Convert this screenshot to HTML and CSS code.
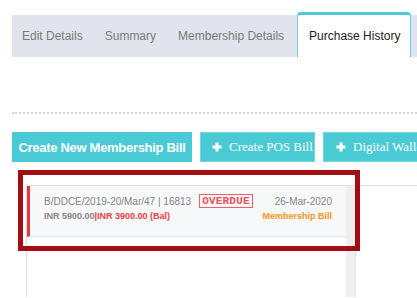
FILE: index.html
```html
<!DOCTYPE html>
<html>
<head>
<meta charset="utf-8">
<link rel="stylesheet" href="styles.css">
</head>
<body>
<div class="page">
  <div class="tabs">
    <div class="tab first">Edit Details</div>
    <div class="tab">Summary</div>
    <div class="tab">Membership Details</div>
    <div class="tab active">Purchase History</div>
  </div>
  <div class="divider"></div>
  <div class="actions">
    <div class="btn btn-main">Create New Membership Bill</div>
    <div class="btn btn-icon btn-pos">
      <svg class="plus" width="10" height="10" viewBox="0 0 10 10"><path d="M5 0.5V9.5M0.5 5H9.5" stroke="#fff" stroke-width="3"/></svg>
      <span>Create POS Bill</span>
    </div>
    <div class="btn btn-icon btn-wallet">
      <svg class="plus" width="10" height="10" viewBox="0 0 10 10"><path d="M5 0.5V9.5M0.5 5H9.5" stroke="#fff" stroke-width="3"/></svg>
      <span>Digital Wallet</span>
    </div>
  </div>
  <div class="panel">
    <div class="list">
      <div class="card">
        <div class="row">
          <div class="left">
            <span class="bill-no">B/DDCE/2019-20/Mar/47 | 16813</span>
            <span class="stamp">OVERDUE</span>
          </div>
          <span class="date">26-Mar-2020</span>
        </div>
        <div class="row">
          <div class="amounts"><span class="amt">INR 5900.00</span><span class="bal">|INR 3900.00 (Bal)</span></div>
          <span class="type">Membership Bill</span>
        </div>
      </div>
    </div>
    <div class="scroll"></div>
    <div class="rest"></div>
  </div>
  <div class="highlight"></div>
</div>
</body>
</html>
```
FILE: styles.css
```css
html, body {
  margin: 0;
  padding: 0;
  background: #fff;
  overflow: hidden;
  width: 417px;
  height: 298px;
}
.page {
  position: relative;
  font-family: "Liberation Sans", Arial, sans-serif;
  padding-left: 12px;
  height: 298px;
  box-sizing: border-box;
  overflow: hidden;
}
.tabs {
  margin-top: 15px;
  height: 42px;
  background: #e1e4ec;
  display: flex;
  align-items: flex-end;
}
.tab {
  height: 42px;
  line-height: 42px;
  padding: 0 11px;
  font-size: 12px;
  color: #7a7a7a;
  white-space: nowrap;
}
.tab.first {
  padding-left: 10px;
}
.tab.active {
  margin-left: 2px;
  height: 45px;
  line-height: 42px;
  padding: 0 10px 0 11px;
  background: #fff;
  color: #222;
  border: 1px solid #5fd2da;
  border-top: 3px solid #4ccbd5;
  border-bottom: none;
  border-radius: 4px 4px 0 0;
  box-sizing: border-box;
}
.divider {
  margin-top: 55px;
  border-top: 2px dotted #d6d6d6;
}
.actions {
  margin-top: 18px;
  display: flex;
  gap: 8px;
  white-space: nowrap;
}
.btn {
  flex: none;
  height: 30px;
  box-sizing: border-box;
  background: #49cad5;
  color: #fff;
  display: flex;
  align-items: center;
}
.btn-main {
  width: 180px;
  justify-content: center;
  font-family: "Liberation Sans", Arial, sans-serif;
  font-weight: bold;
  font-size: 13px;
  letter-spacing: -0.3px;
}
.btn-icon {
  border: 1px solid #72d6de;
  font-family: "Liberation Serif", "Times New Roman", serif;
  font-size: 13px;
  gap: 7px;
  padding-left: 11px;
}
.btn-pos {
  width: 115px;
}
.btn-wallet {
  width: 120px;
  padding-left: 12px;
}
.plus {
  display: block;
  flex: none;
}
.panel {
  margin-top: 23px;
  margin-left: 14px;
  border-top: 1px solid #e2e2e2;
  border-left: 1px solid #dcdcdc;
  display: flex;
  height: 112px;
  box-sizing: border-box;
}
.list {
  width: 319px;
  flex: none;
}
.scroll {
  width: 9px;
  flex: none;
  background: #efefef;
  border-right: 1px solid #e2e2e2;
}
.rest {
  flex: 1;
}
.card {
  height: 51px;
  box-sizing: border-box;
  background: #f7f8fa;
  border-left: 3px solid #e8343c;
  border-bottom: 1px solid #e4e4e4;
  padding: 8px 14px 0 14px;
}
.row {
  display: flex;
  justify-content: space-between;
  align-items: center;
}
.row + .row {
  margin-top: 3px;
}
.left {
  display: flex;
  align-items: center;
  gap: 8px;
}
.bill-no {
  font-size: 10px;
  color: #858585;
}
.stamp {
  font-family: "Liberation Mono", monospace;
  font-size: 11px;
  line-height: 12px;
  color: #e8424c;
  border: 1.5px solid #e8525b;
  padding: 0 2px;
  opacity: 0.9;
  letter-spacing: 0.2px;
  font-weight: bold;
}
.date {
  font-size: 10px;
  color: #858585;
}
.amounts {
  font-size: 9px;
  font-weight: bold;
}
.amt {
  color: #858585;
}
.bal {
  color: #ef3e44;
}
.type {
  font-size: 9px;
  font-weight: bold;
  color: #f7941d;
}
.highlight {
  position: absolute;
  left: 18px;
  top: 170px;
  width: 342px;
  height: 81px;
  box-sizing: border-box;
  border: 5px solid #a30d14;
}
```
